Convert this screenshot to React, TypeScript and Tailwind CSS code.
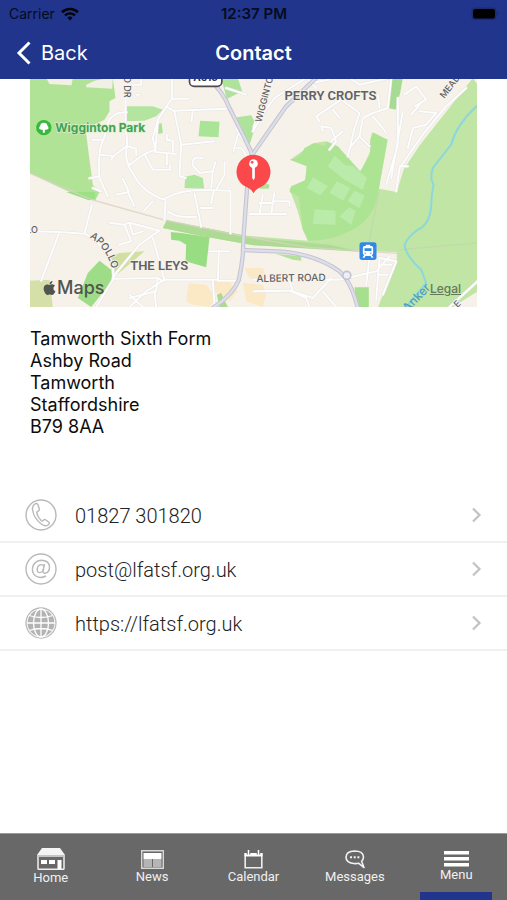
import type { ReactNode } from "react";
import { FaApple } from "react-icons/fa";

const ADDRESS = [
  "Tamworth Sixth Form",
  "Ashby Road",
  "Tamworth",
  "Staffordshire",
  "B79 8AA",
];

function StatusBar() {
  return (
    <div className="grid h-7 grid-cols-3 items-center pr-2 pl-[9px] text-sm text-[#060b22]">
      <div className="flex items-center gap-[6px]">
        <span>Carrier</span>
        <svg className="h-[14px] w-[18px]" viewBox="0 0 18 14" fill="none" stroke="#02040d">
          <path d="M1 5.2a11.5 11.5 0 0 1 16 0" strokeWidth="2.6" />
          <path d="M4 8.3a7.2 7.2 0 0 1 10 0" strokeWidth="2.3" />
          <path d="M9 13.6 6.3 10.8a4 4 0 0 1 5.4 0z" fill="#02040d" stroke="none" />
        </svg>
      </div>
      <span className="text-center text-[15px] font-semibold">12:37 PM</span>
      <svg className="h-[14px] w-[28px] justify-self-end" viewBox="0 0 28 14">
        <rect x="0.5" y="0.5" width="25" height="12.5" rx="4" fill="#1b2c70" />
        <rect x="2" y="2" width="22" height="9.5" rx="2.5" fill="#000" />
        <path d="M26.5 4.5q1.8 2.2 0 4.4z" fill="#17255f" />
      </svg>
    </div>
  );
}

function Header() {
  return (
    <header className="bg-[#20358b]">
      <StatusBar />
      <div className="grid h-[51px] grid-cols-3 items-center pb-[2px] text-xl text-white">
        <button type="button" className="flex items-center gap-[10px] pl-4 text-white">
          <svg className="h-6 w-[15px]" viewBox="0 0 15 24" fill="none" stroke="currentColor" strokeWidth="3">
            <path d="M13.5 1.5 3 12l10.5 10.5" />
          </svg>
          Back
        </button>
        <h1 className="text-center font-semibold">Contact</h1>
      </div>
    </header>
  );
}

// Minor streets, drawn twice: a grey casing, then white on top
const STREETS = [
  "M288 0V151Q294 180 293 205Q284 235 300 270L325 311Q350 345 400 364Q450 336 520 336L603 338V466",
  "M291 103Q250 100 235 135Q228 175 215 200Q205 240 210 300L235 355",
  "M180 301L210 295M188 185H222M212 230L252 234L291 205M252 234L245 245",
  "M293 205L320 212V232M297 262L345 228L378 215L385 125M345 228L370 275H422V262",
  "M320 50H330M310 20H335V0M378 222L440 228M412 228V260",
  "M428 0V60L385 125L370 180L378 222M428 62H478M412 185V170",
  "M410 85L435 100L455 200L450 295L468 300M435 98L590 92M490 95L486 130M455 200L555 190M412 185L430 188V222",
  "M520 240Q485 232 490 262L510 285L550 280L545 330M550 280L558 252M585 252V290L560 336",
  "M655 250Q640 200 622 210M625 170L612 220",
  "M590 30L650 50M620 150L640 185M672 150L720 0",
  "M0 460L90 462L165 467L187 380M90 462L35 608M165 467Q215 490 250 560L252 602L200 687",
  "M190 330L215 340M260 350L298 342L280 302M295 342L315 385M370 370L342 400",
  "M240 434L285 440L305 490L268 500M285 440L300 434L390 458L330 500L260 585L250 600",
  "M300 434L310 470L340 460M370 480L405 605H565L568 520M540 520H600",
  "M250 602L385 600L400 610M385 600L380 640L300 660",
  "M408 366L405 426M415 400Q445 422 500 416M495 346L515 446M515 390H550M553 336L545 375",
  "M550 608L555 680M565 608L625 608M405 605L350 640L300 687M375 640L380 687M300 650L340 687",
  "M735 60L830 0M735 60L705 100L670 160M860 30L835 5M790 70L840 15L900 5",
  "M960 0L990 20L1080 0M860 115L935 65L990 105L975 150L955 235M860 115L870 130M930 120L910 95M1000 120L1030 105L1075 90L1085 0M1030 115L1060 150L1070 165M1000 120L990 175L960 210",
  "M880 160L875 145L905 150L920 190L900 215M940 160L905 190M990 175L1020 205M1045 50L1050 90",
  "M1105 60V200L1070 320M1120 100L1085 300M1110 265H1135M1310 30L1245 90L1180 170L1110 270L1100 340M1125 50L1160 25L1190 65L1155 85M1175 75L1145 110M1135 210L1150 150L1190 140L1220 105L1170 100",
  "M660 408H770M690 408L700 350M725 408L735 340M735 370H780V385M690 375H725",
  "M672 605H930L1040 580L1080 535M1040 665L1050 540",
  "M672 640L780 638L830 660L840 687M780 608L790 640L850 660L905 600M880 640L920 687",
  "M1020 540L1010 620M1050 540L1100 550L1060 650M1055 560H1085M1045 590H1075M1260 687L1344 610",
];

const MAIN_ROADS = [
  "M535 0Q580 40 600 90L650 190Q665 215 670 240",
  "M860 0L770 85L672 225L655 300L642 476L640 530Q636 570 628 606Q610 650 550 690",
  "M640 516L760 521Q860 530 930 580Q965 610 985 690",
];

function ContactMap() {
  return (
    <div className="relative">
      <svg
        className="block h-[228px] w-full"
        viewBox="0 3 1344 684"
        preserveAspectRatio="xMidYMid slice"
        role="img"
        aria-label="Map of Ashby Road, Tamworth"
      >
        <rect width="1344" height="690" fill="#f6f2ea" />

        {/* parks and open ground */}
        <path d="M0 0H250L258 60L240 70V100L225 125L168 152L178 230L190 320L210 342L198 366L120 342L0 286Z" fill="#b0e396" />
        <path d="M50 0H130L126 22L60 18ZM170 20L195 8L235 0H250L248 32L170 28Z" fill="#f2efe5" />
        <path d="M110 342H196L198 364L178 367Z" fill="#9be083" />
        <path d="M292 85H370L400 95L380 115L345 128L292 130Z" fill="#b3e5a0" />
        <path d="M378 140L396 135L400 165L385 168Z" fill="#ade197" />
        <path d="M512 128L570 131L567 178L507 175Z" fill="#aae497" />
        <path d="M467 296L495 290L520 300L524 332L465 330Z" fill="#ade69c" />
        <path d="M575 0H625L638 40L592 63ZM622 118L665 112L680 140L655 215L635 165Z" fill="#ade39a" />
        <path d="M690 310L720 320L718 332H690Z" fill="#ade39a" />
        <path d="M1085 0H1120L1112 45L1098 95L1077 90Z" fill="#a6dc91" />
        <path d="M1330 0L1344 20V640L1270 687H1046L1102 542V523L672 502L520 475L400 450L412 427L640 472L835 488V464L820 455L805 400L780 332L827 307L832 265L782 245L852 196L887 190L992 285L1022 220L1027 165L1075 185L1048 332L1102 342L1122 275L1172 200Z" fill="#c0e5a4" />
        <path d="M782 245Q815 240 825 210L852 196L887 204L890 190L925 205L992 280L1022 230V185L1030 163L1073 185L1048 332Q1040 420 960 460Q900 490 835 488L820 455L808 355L780 342L785 325L827 307L832 265Z" fill="#ace494" />
        <path d="M672 480L900 500L1000 522L672 502L520 475L400 450L412 427L640 472Z" fill="#addb93" />
        <path d="M424 462L455 465L540 478L530 568L468 550L470 500L450 488L425 485Z" fill="#99dd82" />
        <path d="M210 548L245 575L250 605L185 687L145 660L175 585Z" fill="#9edc88" />
        <path d="M245 535L270 525L345 520L280 575L248 600Z" fill="#d1e0a0" />
        <path d="M0 608L60 605L70 687H0Z" fill="#d5dfa8" />
        <path d="M975 628H1018V687H980Z" fill="#a6df8e" />
        <path d="M738 527L815 535L815 548L790 545Z" fill="#b2e29a" />

        {/* playing fields */}
        <path
          d="M915 233L948 262L970 265L1012 300L1000 335L945 305L895 265ZM850 298L895 325L872 352L832 330ZM855 394L918 398V440L850 438ZM922 310L962 330L942 368L900 345ZM975 338L1005 352L990 390L955 370ZM960 388L978 400L965 440L930 415Z"
          fill="#bbebaa"
        />

        {/* shopping areas */}
        <path
          d="M478 615L530 620L560 660L540 687L490 680L470 670ZM550 605L600 610L625 640L600 670L555 640ZM645 570H700L715 610L660 600ZM640 615L700 620L710 650L700 687L650 670Z"
          fill="#fbe8c4"
        />
        <path d="M562 650L575 645L595 687H570Z" fill="#abdb8e" />

        {/* railway */}
        <path d="M0 285L190 366L400 425L640 475L835 508L1102 526" fill="none" stroke="#d9d2c5" strokeWidth="4" opacity=".8" />
        <path d="M1048 342L1015 510M1110 515L1344 495" fill="none" stroke="#c1d7b0" strokeWidth="3" />

        {/* river */}
        <path d="M1344 82Q1280 140 1265 200L1210 270Q1200 300 1212 320Q1205 355 1205 385Q1200 440 1165 455Q1130 480 1125 505Q1135 540 1175 575L1190 615L1130 687" fill="none" stroke="#8bd8dc" strokeWidth="6" />

        <g fill="none" strokeLinejoin="round" strokeLinecap="round">
          {STREETS.map((d) => (
            <path key={d} d={d} stroke="#e6e3e2" strokeWidth="9" />
          ))}
          {STREETS.map((d) => (
            <path key={d} d={d} stroke="#fdfdfd" strokeWidth="6" />
          ))}
          {MAIN_ROADS.map((d) => (
            <path key={d} d={d} stroke="#c3c3d1" strokeWidth="13" />
          ))}
          {MAIN_ROADS.map((d) => (
            <path key={d} d={d} stroke="#dedee9" strokeWidth="7" />
          ))}
          <circle cx="952" cy="592" r="12" fill="#eeeef4" stroke="#c3c3d1" strokeWidth="5" />
        </g>

        {/* road shield */}
        <rect x="480" y="-40" width="97" height="65" rx="14" fill="#fff" stroke="#4b4b4d" strokeWidth="5" />
        <text x="528" y="10" textAnchor="middle" fontSize="30" fontWeight="700" fill="#333">A513</text>

        {/* labels */}
        <g fill="#626166" stroke="#f7f4ec" strokeWidth="5" paintOrder="stroke" strokeLinejoin="round">
          <g className="font-[Roboto,sans-serif]" fontWeight="600" fontSize="39">
            <text x="765" y="66">PERRY CROFTS</text>
            <text x="302" y="575">THE LEYS</text>
          </g>
          <g fontSize="27" fontWeight="500">
            <text x="681" y="612" transform="rotate(-1 681 612)" fontSize="30">ALBERT ROAD</text>
            <text transform="translate(695 134) rotate(-75)">WIGGINTON</text>
            <text transform="translate(282 -6) rotate(90)">O DR</text>
            <text transform="translate(1244 62) rotate(-52)">MEADOW</text>
            <text x="-10" y="464">LO</text>
            <text transform="translate(1284 690) rotate(-45)">E</text>
            <path id="apollo" d="M180 478Q235 510 252 590" fill="none" stroke="none" />
            <text fontSize="30">
              <textPath href="#apollo">APOLLO</textPath>
            </text>
          </g>
        </g>
        <text transform="translate(1134 704) rotate(-46)" fontSize="36" fontWeight="500" fill="#4d9bc5">Anker</text>
        <text x="77" y="162" fontSize="36" fontWeight="700" fill="#43a251" stroke="#d9f1cd" strokeWidth="4" paintOrder="stroke">Wigginton Park</text>
        <circle cx="43" cy="149" r="23" fill="#39b73e" />
        <path d="M43 134q10 0 11 9q8 10-4 12h-4v9h-6v-9h-4q-12-2-4-12q1-9 11-9" fill="#fff" />

        {/* station */}
        <rect x="990" y="493" width="51" height="53" rx="8" fill="#3288e6" />
        <path d="M1009 500h13v4h4q5 0 5 5v17q0 4-4 5l5 8h-6l-3-5h-15l-3 5h-6l5-8q-4-1-4-5v-17q0-5 5-5h4z" fill="#fff" />
        <path d="M1005 511h21v8h-21zM1005 524h4v3h-4zM1022 524h4v3h-4z" fill="#3288e6" />

        {/* pin */}
        <path d="M672 346C665 332 652 329 641 322A51 51 0 1 1 703 322C692 329 679 332 672 346Z" fill="#fb484b" />
        <circle cx="672" cy="257" r="13" fill="#fff" />
        <path d="M668 266h8v34l-4 7-4-7z" fill="#fff" />
        <circle cx="668" cy="253" r="4" fill="#fb484b" />
      </svg>

      <div className="absolute bottom-[7px] left-3 flex items-center text-[#505550]">
        <FaApple className="h-4 w-[15px]" />
        <span className="text-lg leading-6 font-medium">Maps</span>
      </div>
      <a href="#legal" className="absolute right-4 bottom-2 text-xs leading-5 font-medium text-[#66775c] underline">
        Legal
      </a>
    </div>
  );
}

function PhoneIcon() {
  return (
    <svg className="h-8 w-8" viewBox="0 0 32 32" fill="none" stroke="#b9b9b9" strokeWidth="1.4">
      <circle cx="16" cy="16" r="15" />
      <path d="M10 5q-2.800 1.700-2.500 5.500q1.200 9 9.500 15q3.300 2.300 6 .500l1-1q.700-1-.400-2l-3-2.200q-1.100-.700-2 .200l-.800.900q-.800.600-1.700-.300q-3.200-3.400-4.300-7.600q-.2-1.200.7-1.500l1-.5q1.100-.6.800-2l-1.300-4.300q-.7-1.700-2.500-1z" />
    </svg>
  );
}

function EmailIcon() {
  return (
    <svg className="h-8 w-8" viewBox="0 0 32 32" fill="none" stroke="#b9b9b9" strokeWidth="1.400">
      <circle cx="16" cy="16" r="15" />
      <path d="M21 23q-6.500 3.200-11-.500q-3.600-3.500-2.200-8.800q2-6 8.600-6.400q7.600.2 8.100 6.400q.1 5.800-4.500 6.600q-2.400 0-2-2.500l1.500-6.800" />
      <path d="M19.200 13.500q-1.700-2.700-4.500-1.500q-2.900 1.700-2.500 5q.7 3.300 3.500 2.400q2.500-1 3.100-3.800" />
    </svg>
  );
}

function GlobeIcon() {
  return (
    <svg className="h-8 w-8" viewBox="0 0 32 32" fill="none">
      <circle cx="16" cy="16" r="15" stroke="#b9b9b9" strokeWidth="1.300" />
      <circle cx="16" cy="16" r="13.500" fill="#b3b3b3" />
      <g stroke="#fff" strokeWidth="1.300">
        <path d="M16 2v28M2 16h28M4 8.500q12 4 24 0M4 23.500q12-4 24 0" />
        <ellipse cx="16" cy="16" rx="7.500" ry="14" />
      </g>
    </svg>
  );
}

function ContactRow({ href, icon, label }: { href: string; icon: ReactNode; label: string }) {
  return (
    <li>
      <a href={href} className="flex h-[54px] items-center border-b-2 border-[#f0f0f0] pr-6 pl-[25px]">
        {icon}
        <span className="ml-[18px] flex-1 pt-[2px] font-[Roboto,sans-serif] text-xl font-light text-[#222]">{label}</span>
        <svg className="h-4 w-3" viewBox="0 0 12 16" fill="none" stroke="#c2c2c2" strokeWidth="2.200">
          <path d="M2 1.500 8.500 8 2 14.500" />
        </svg>
      </a>
    </li>
  );
}

function HomeIcon() {
  return (
    <svg className="h-[22px] w-[28px]" viewBox="0 0 28 22">
      <path d="M5 0h18l5 7H0z" fill="#f4f4f4" />
      <path d="M1 7v13.500q0 .8.800.8h24.400q.8 0 .8-.8V7" fill="none" stroke="#eee" strokeWidth="1.500" />
      <path d="M1 8h26" stroke="#c4c4c4" strokeWidth="2" />
      <path d="M4 12h6v4H4zM12 12h6v4h-6zM20.500 12h4v9h-4z" fill="#fff" />
    </svg>
  );
}

function NewsIcon() {
  return (
    <svg className="h-[19px] w-[23px]" viewBox="0 0 23 19">
      <path d="M.7.7h21.600v17.600H.7z" fill="none" stroke="#d8d8d8" strokeWidth="1.400" />
      <path d="M2.500 3h18v6h-18z" fill="#fff" />
      <path d="M2.500 9h8.500v8H2.500zM12 9h8.500v8H12z" fill="#b5b5b5" />
    </svg>
  );
}

function CalendarIcon() {
  return (
    <svg className="h-[19px] w-[19px]" viewBox="0 0 19 19">
      <path d="M1.200 4h16.600v13.800H1.200z" fill="none" stroke="#eee" strokeWidth="1.600" />
      <path d="M.5 3h18v3.500H.5z" fill="#fff" />
      <path d="M4.500 0v4.500M14.500 0v4.500" stroke="#686868" strokeWidth="3.500" />
      <path d="M4.500 0v5M14.500 0v5" stroke="#fff" strokeWidth="1.500" />
    </svg>
  );
}

function MessagesIcon() {
  return (
    <svg className="h-[19px] w-5" viewBox="0 0 20 19" fill="none" stroke="#f0f0f0" strokeWidth="1.600">
      <path d="M13.500 13.200Q11 13.900 8.500 13.500Q1 12.500 1 7.200Q1.200 1.200 9.500 1Q18.300 1.100 18.500 7q-.1 2.500-1.900 4.300l2.400 6.200z" strokeLinejoin="round" />
      <path d="M5 7.200h2M8.700 7.200h2M12.400 7.200h2" strokeWidth="2" />
    </svg>
  );
}

function MenuIcon() {
  return (
    <svg className="h-4 w-[25px]" viewBox="0 0 25 16" fill="#fff">
      <path d="M0 0h25v3.500H0zM0 6h25v3.500H0zM0 12h25v3.500H0z" />
    </svg>
  );
}

const TABS = [
  { label: "Home", icon: <HomeIcon /> },
  { label: "News", icon: <NewsIcon /> },
  { label: "Calendar", icon: <CalendarIcon /> },
  { label: "Messages", icon: <MessagesIcon /> },
  { label: "Menu", icon: <MenuIcon />, active: true },
];

function TabBar() {
  return (
    <nav className="mt-auto grid h-[67px] grid-cols-5 border-t border-[#999] bg-[#686868] font-[Roboto,sans-serif] text-[13px] leading-4 text-[#f0f0f0]">
      {TABS.map(({ label, icon, active }) => (
        <button key={label} type="button" className="relative flex flex-col items-center justify-center">
          {icon}
          {label}
          {active && <span className="absolute bottom-0 h-2 w-[72px] bg-[#20358b]" />}
        </button>
      ))}
    </nav>
  );
}

export default function App() {
  return (
    <div className="flex min-h-screen flex-col bg-white font-[Inter,sans-serif]">
      <Header />
      <main>
        <div className="px-[30px]">
          <ContactMap />
          <address className="mt-[21px] text-lg leading-[22px] text-[#0c0c0c] not-italic">
            {ADDRESS.map((line) => (
              <div key={line}>{line}</div>
            ))}
          </address>
        </div>
        <ul className="mt-[51px]">
          <ContactRow href="tel:01827301820" icon={<PhoneIcon />} label="01827 301820" />
          <ContactRow href="mailto:post@lfatsf.org.uk" icon={<EmailIcon />} label="post@lfatsf.org.uk" />
          <ContactRow href="https://lfatsf.org.uk" icon={<GlobeIcon />} label="https://lfatsf.org.uk" />
        </ul>
      </main>
      <TabBar />
    </div>
  );
}
